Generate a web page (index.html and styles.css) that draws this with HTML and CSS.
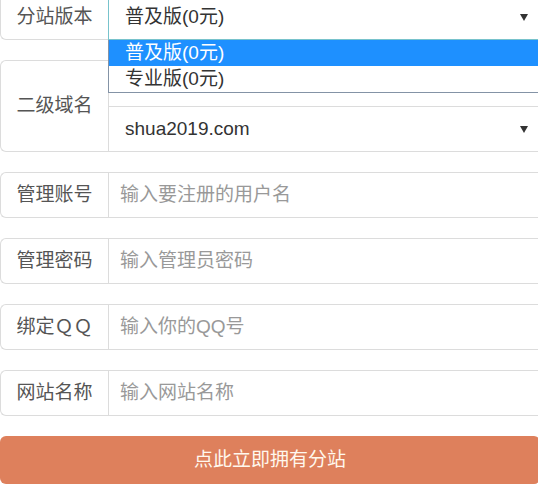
FILE: index.html
```html
<!DOCTYPE html>
<html lang="zh-CN">
<head>
<meta charset="utf-8">
<title>开通分站</title>
<link rel="stylesheet" href="styles.css">
</head>
<body>
<form class="form">
  <div class="group">
    <span class="addon">分站版本</span>
    <div class="field select focused">
      <span class="value">普及版(0元)</span>
      <span class="caret"></span>
      <ul class="dropdown">
        <li class="option active">普及版(0元)</li>
        <li class="option">专业版(0元)</li>
      </ul>
    </div>
  </div>
  <div class="group tall">
    <span class="addon">二级域名</span>
    <div class="stack">
      <input class="field input" type="text" value="">
      <div class="field select">
        <span class="value">shua2019.com</span>
        <span class="caret"></span>
      </div>
    </div>
  </div>
  <div class="group">
    <span class="addon">管理账号</span>
    <input class="field input" type="text" placeholder="输入要注册的用户名">
  </div>
  <div class="group">
    <span class="addon">管理密码</span>
    <input class="field input" type="text" placeholder="输入管理员密码">
  </div>
  <div class="group">
    <span class="addon">绑定ＱＱ</span>
    <input class="field input" type="text" placeholder="输入你的QQ号">
  </div>
  <div class="group">
    <span class="addon">网站名称</span>
    <input class="field input" type="text" placeholder="输入网站名称">
  </div>
  <button type="button" class="submit">点此立即拥有分站</button>
</form>
</body>
</html>
```

FILE: styles.css
```css
html, body {
  margin: 0;
  padding: 0;
  background: #fff;
  overflow: hidden;
}

body {
  font-family: "Liberation Sans", "Noto Sans CJK SC", sans-serif;
  font-size: 19px;
  color: #555;
}

.form {
  width: 540px;
  margin-top: -6px;
  display: flex;
  flex-direction: column;
  gap: 20px;
}

.group {
  display: flex;
  height: 46px;
}

.group.tall {
  height: 92px;
}

.addon {
  box-sizing: border-box;
  width: 108px;
  flex: none;
  display: flex;
  align-items: center;
  justify-content: center;
  border: 1px solid #dcdcdc;
  border-right: none;
  border-radius: 6px 0 0 6px;
  color: #555;
  font-size: 19px;
  line-height: 24px;
  background: #fff;
}

.stack {
  flex: 1;
  display: flex;
  flex-direction: column;
}

.field {
  box-sizing: border-box;
  flex: 1;
  height: 46px;
  margin: 0;
  border: 1px solid #dcdcdc;
  background: #fff;
  font-family: inherit;
  font-size: 19px;
  color: #333;
  outline: none;
}

.input {
  padding: 0 11px;
  width: 100%;
}

.stack .field {
  flex: none;
  width: 100%;
}

.stack .input {
  border-bottom: none;
}

.input::placeholder {
  color: #999;
}

.select {
  position: relative;
  display: flex;
  align-items: center;
  justify-content: space-between;
  padding: 0 11px 0 16px;
}

.select.focused {
  border-color: #78c3cc;
}

.value {
  line-height: 24px;
}

.caret {
  width: 0;
  height: 0;
  border-left: 4px solid transparent;
  border-right: 4px solid transparent;
  border-top: 7px solid #333;
}

.dropdown {
  position: absolute;
  top: 45px;
  left: -1px;
  right: -1px;
  margin: 0;
  padding: 0;
  list-style: none;
  background: #fff;
  border: 1px solid #8493a6;
  border-top: none;
  z-index: 5;
}

.option {
  height: 26px;
  line-height: 26px;
  padding-left: 16px;
  font-size: 19px;
  color: #333;
}

.option.active {
  background: #1e90ff;
  color: #fff;
}

.submit {
  box-sizing: border-box;
  width: 100%;
  height: 48px;
  border: none;
  border-radius: 6px;
  background: #de805c;
  color: #fff8ee;
  font-family: inherit;
  font-size: 19px;
  line-height: 24px;
  padding: 0;
}
```
